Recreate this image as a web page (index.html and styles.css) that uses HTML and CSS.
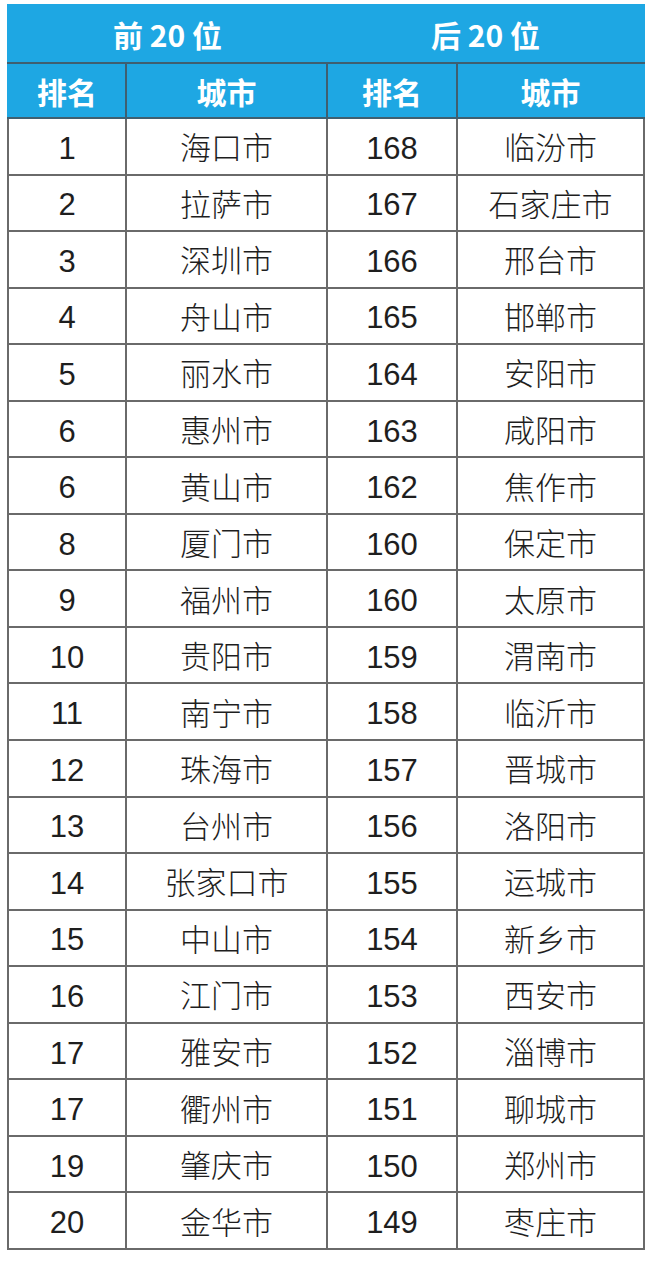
FILE: index.html
```html
<!DOCTYPE html>
<html lang="zh">
<head>
<meta charset="utf-8">
<link rel="stylesheet" href="styles.css">
</head>
<body>
<div class="wrap">
<table class="rank">
<colgroup><col class="c1"><col class="c2"><col class="c3"><col class="c4"></colgroup>
<thead>
<tr class="h1"><th colspan="2">前 20 位</th><th colspan="2">后 20 位</th></tr>
<tr class="h2"><th>排名</th><th>城市</th><th>排名</th><th>城市</th></tr>
</thead>
<tbody>
<tr><td>1</td><td class="city">海口市</td><td>168</td><td class="city">临汾市</td></tr>
<tr><td>2</td><td class="city">拉萨市</td><td>167</td><td class="city">石家庄市</td></tr>
<tr><td>3</td><td class="city">深圳市</td><td>166</td><td class="city">邢台市</td></tr>
<tr><td>4</td><td class="city">舟山市</td><td>165</td><td class="city">邯郸市</td></tr>
<tr><td>5</td><td class="city">丽水市</td><td>164</td><td class="city">安阳市</td></tr>
<tr><td>6</td><td class="city">惠州市</td><td>163</td><td class="city">咸阳市</td></tr>
<tr><td>6</td><td class="city">黄山市</td><td>162</td><td class="city">焦作市</td></tr>
<tr><td>8</td><td class="city">厦门市</td><td>160</td><td class="city">保定市</td></tr>
<tr><td>9</td><td class="city">福州市</td><td>160</td><td class="city">太原市</td></tr>
<tr><td>10</td><td class="city">贵阳市</td><td>159</td><td class="city">渭南市</td></tr>
<tr><td>11</td><td class="city">南宁市</td><td>158</td><td class="city">临沂市</td></tr>
<tr><td>12</td><td class="city">珠海市</td><td>157</td><td class="city">晋城市</td></tr>
<tr><td>13</td><td class="city">台州市</td><td>156</td><td class="city">洛阳市</td></tr>
<tr><td>14</td><td class="city">张家口市</td><td>155</td><td class="city">运城市</td></tr>
<tr><td>15</td><td class="city">中山市</td><td>154</td><td class="city">新乡市</td></tr>
<tr><td>16</td><td class="city">江门市</td><td>153</td><td class="city">西安市</td></tr>
<tr><td>17</td><td class="city">雅安市</td><td>152</td><td class="city">淄博市</td></tr>
<tr><td>17</td><td class="city">衢州市</td><td>151</td><td class="city">聊城市</td></tr>
<tr><td>19</td><td class="city">肇庆市</td><td>150</td><td class="city">郑州市</td></tr>
<tr><td>20</td><td class="city">金华市</td><td>149</td><td class="city">枣庄市</td></tr>
</tbody>
</table>
</div>
</body>
</html>
```

FILE: styles.css
```css
html, body {
  margin: 0;
  padding: 0;
  background: #ffffff;
}
.wrap {
  padding: 4px 7px 0 7px;
}
.rank {
  width: 636px;
  border-collapse: collapse;
  table-layout: fixed;
  font-family: "Liberation Sans", "Noto Sans CJK SC", sans-serif;
  color: #1e1e1e;
}
.c1 { width: 118px; }
.c2 { width: 201px; }
.c3 { width: 130px; }
.c4 { width: 187px; }
.rank th {
  background: #1ea7e3;
  color: #ffffff;
  font-family: "Noto Sans CJK SC", sans-serif;
  font-weight: bold;
  font-size: 30px;
  line-height: 32px;
  text-align: center;
  padding: 0;
  border: 2px solid #3f5f70;
  border-top-color: #1ea7e3;
}
.rank .h1 th {
  height: 56px;
  border-left-color: #1ea7e3;
  border-right-color: #1ea7e3;
}
.rank .h1 th + th {
  border-left-color: #3f5f70;
}
.rank .h2 th {
  height: 53px;
  border-top-color: #3f5f70;
  border-bottom-color: #3f5f70;
}
.rank .h2 th:first-child {
  border-left-color: #1ea7e3;
}
.rank .h2 th:last-child {
  border-right-color: #1ea7e3;
}
.rank td {
  height: 49.55px;
  padding: 5px 0 0 0;
  text-align: center;
  font-size: 31px;
  line-height: 32px;
  font-weight: normal;
  border: 2px solid #6a6a6a;
}
.rank td.city {
  height: 54.55px;
  font-family: "Noto Sans CJK SC", sans-serif;
  font-weight: 300;
  font-size: 31px;
  padding: 0;
}
```
